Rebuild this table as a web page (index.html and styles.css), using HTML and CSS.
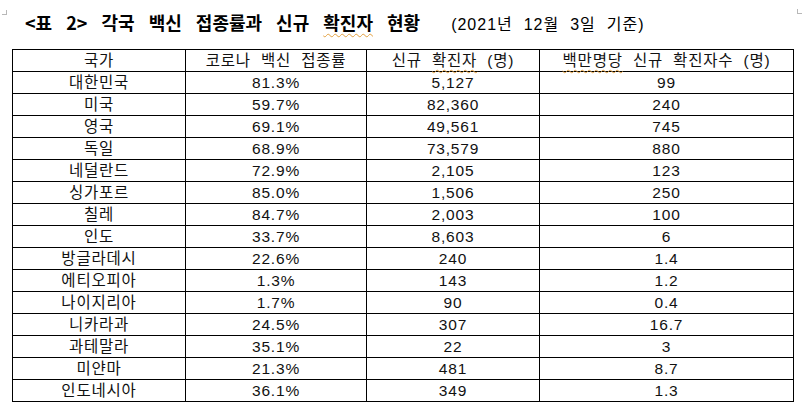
FILE: index.html
```html
<!DOCTYPE html>
<html lang="ko">
<head>
<meta charset="utf-8">
<link rel="stylesheet" href="styles.css">
</head>
<body>
<div class="page">
  <span class="mark mark-left"></span>
  <span class="mark mark-right"></span>
  <div class="title-row">
    <span class="title">&lt;표 2&gt; 각국 백신 접종률과 신규 <span class="spell">확진자</span> 현황</span>
    <span class="subtitle">(2021년 12월 3일 기준)</span>
  </div>
  <table class="data">
    <colgroup>
      <col class="c1"><col class="c2"><col class="c3"><col class="c4">
    </colgroup>
    <thead>
      <tr><th>국가</th><th>코로나 백신 접종률</th><th>신규 <span class="spell">확진자</span> (명)</th><th><span class="spell">백만명당</span> 신규 확진자수 (명)</th></tr>
    </thead>
    <tbody>
      <tr><td>대한민국</td><td>81.3%</td><td>5,127</td><td>99</td></tr>
      <tr><td>미국</td><td>59.7%</td><td>82,360</td><td>240</td></tr>
      <tr><td>영국</td><td>69.1%</td><td>49,561</td><td>745</td></tr>
      <tr><td>독일</td><td>68.9%</td><td>73,579</td><td>880</td></tr>
      <tr><td>네덜란드</td><td>72.9%</td><td>2,105</td><td>123</td></tr>
      <tr><td>싱가포르</td><td>85.0%</td><td>1,506</td><td>250</td></tr>
      <tr><td>칠레</td><td>84.7%</td><td>2,003</td><td>100</td></tr>
      <tr><td>인도</td><td>33.7%</td><td>8,603</td><td>6</td></tr>
      <tr><td>방글라데시</td><td>22.6%</td><td>240</td><td>1.4</td></tr>
      <tr><td>에티오피아</td><td>1.3%</td><td>143</td><td>1.2</td></tr>
      <tr><td>나이지리아</td><td>1.7%</td><td>90</td><td>0.4</td></tr>
      <tr><td>니카라과</td><td>24.5%</td><td>307</td><td>16.7</td></tr>
      <tr><td>과테말라</td><td>35.1%</td><td>22</td><td>3</td></tr>
      <tr><td>미얀마</td><td>21.3%</td><td>481</td><td>8.7</td></tr>
      <tr><td>인도네시아</td><td>36.1%</td><td>349</td><td>1.3</td></tr>
    </tbody>
  </table>
</div>
</body>
</html>
```
FILE: styles.css
```css
html, body {
  margin: 0;
  padding: 0;
  background: #ffffff;
}
.page {
  position: relative;
  width: 807px;
  height: 413px;
  font-family: "Liberation Sans", "Noto Sans CJK KR", sans-serif;
  color: #111;
}
.mark {
  position: absolute;
  width: 4px;
  height: 4px;
  border-color: #b8b8b8;
  border-style: solid;
  border-width: 0;
}
.mark-left {
  left: 2px;
  top: 10px;
  border-right-width: 1px;
  border-bottom-width: 1px;
}
.mark-right {
  left: 797px;
  top: 9px;
  border-left-width: 1px;
  border-bottom-width: 1px;
}
.title-row {
  display: flex;
  align-items: baseline;
  height: 49px;
  box-sizing: border-box;
  padding: 10px 0 0 25px;
  line-height: 24px;
}
.title {
  font-family: "Noto Sans CJK KR", sans-serif;
  font-weight: 700;
  font-size: 18px;
  word-spacing: 9px;
  color: #000;
}
.subtitle {
  margin-left: 31px;
  font-family: "Liberation Sans", "Noto Sans CJK KR", sans-serif;
  font-size: 16px;
  letter-spacing: 1px;
  word-spacing: 5.5px;
  color: #000;
}
.spell {
  text-decoration: underline wavy #e2a040;
  text-decoration-thickness: 1px;
  text-underline-offset: 3px;
}
.data {
  margin-left: 12px;
  border-collapse: collapse;
  table-layout: fixed;
  width: 781px;
}
.c1 { width: 173px; }
.c2 { width: 181px; }
.c3 { width: 173px; }
.c4 { width: 254px; }
.data th, .data td {
  border: 1px solid #000;
  padding: 0;
  height: 21px;
  line-height: 21px;
  font-size: 15.5px;
  font-weight: 400;
  text-align: center;
  white-space: nowrap;
  color: #111;
  letter-spacing: 0.8px;
  word-spacing: 5px;
}
```
